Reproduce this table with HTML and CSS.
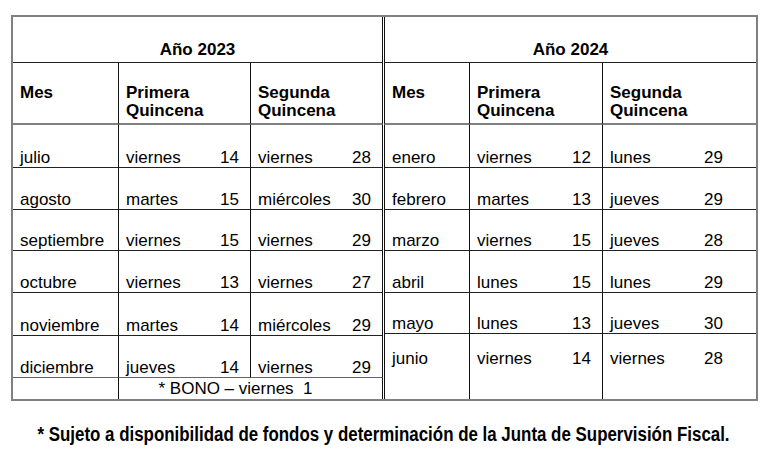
FILE: index.html
```html
<!DOCTYPE html>
<html lang="es">
<head>
<meta charset="utf-8">
<title>Calendario de pagos</title>
<link rel="stylesheet" href="styles.css">
</head>
<body>
<div class="page">
  <div class="frame">
    <table class="cal cal-2023">
      <colgroup><col class="c1"><col class="c2"><col class="c3"></colgroup>
      <thead>
        <tr class="yr"><th colspan="3">Año 2023</th></tr>
        <tr class="hd"><th>Mes</th><th>Primera<br>Quincena</th><th>Segunda<br>Quincena</th></tr>
      </thead>
      <tbody>
        <tr class="h43"><td>julio</td><td><div class="d"><span>viernes</span><span>14</span></div></td><td><div class="d"><span>viernes</span><span>28</span></div></td></tr>
        <tr class="h42"><td>agosto</td><td><div class="d"><span>martes</span><span>15</span></div></td><td><div class="d"><span>miércoles</span><span>30</span></div></td></tr>
        <tr class="h41"><td>septiembre</td><td><div class="d"><span>viernes</span><span>15</span></div></td><td><div class="d"><span>viernes</span><span>29</span></div></td></tr>
        <tr class="h42"><td>octubre</td><td><div class="d"><span>viernes</span><span>13</span></div></td><td><div class="d"><span>viernes</span><span>27</span></div></td></tr>
        <tr class="h43"><td>noviembre</td><td><div class="d"><span>martes</span><span>14</span></div></td><td><div class="d"><span>miércoles</span><span>29</span></div></td></tr>
        <tr class="h42 pre-bono"><td>diciembre</td><td><div class="d"><span>jueves</span><span>14</span></div></td><td><div class="d"><span>viernes</span><span>29</span></div></td></tr>
        <tr class="h21 bono"><td></td><td colspan="2" class="bono-cell">* BONO – viernes&nbsp; 1</td></tr>
      </tbody>
    </table>
    <table class="cal cal-2024">
      <colgroup><col class="k1"><col class="k2"><col class="k3"></colgroup>
      <thead>
        <tr class="yr"><th colspan="3">Año 2024</th></tr>
        <tr class="hd"><th>Mes</th><th>Primera<br>Quincena</th><th>Segunda<br>Quincena</th></tr>
      </thead>
      <tbody>
        <tr class="h43"><td>enero</td><td><div class="d"><span>viernes</span><span>12</span></div></td><td class="last"><div class="d"><span>lunes</span><span>29</span></div></td></tr>
        <tr class="h42"><td>febrero</td><td><div class="d"><span>martes</span><span>13</span></div></td><td class="last"><div class="d"><span>jueves</span><span>29</span></div></td></tr>
        <tr class="h41"><td>marzo</td><td><div class="d"><span>viernes</span><span>15</span></div></td><td class="last"><div class="d"><span>jueves</span><span>28</span></div></td></tr>
        <tr class="h42"><td>abril</td><td><div class="d"><span>lunes</span><span>15</span></div></td><td class="last"><div class="d"><span>lunes</span><span>29</span></div></td></tr>
        <tr class="h41"><td>mayo</td><td><div class="d"><span>lunes</span><span>13</span></div></td><td class="last"><div class="d"><span>jueves</span><span>30</span></div></td></tr>
        <tr class="h65 final"><td>junio</td><td><div class="d"><span>viernes</span><span>14</span></div></td><td class="last"><div class="d"><span>viernes</span><span>28</span></div></td></tr>
      </tbody>
    </table>
  </div>
  <p class="note"><span class="note-text">* Sujeto a disponibilidad de fondos y determinación de la Junta de Supervisión Fiscal.</span></p>
</div>
</body>
</html>
```
FILE: styles.css
```css
* { box-sizing: border-box; }
html, body { margin: 0; padding: 0; background: #fff; }
body {
  font-family: "Liberation Sans", Arial, sans-serif;
  color: #000;
  font-size: 17px;
}
.page { width: 768px; height: 457px; overflow: hidden; }
.frame {
  display: flex;
  gap: 1px;
  margin: 15px 0 0 11px;
  width: 747px;
  height: 386px;
  border: 2px solid #808080;
}
.cal {
  border-collapse: separate;
  border-spacing: 0;
  table-layout: fixed;
}
.cal-2023 { width: 370px; }
.cal-2024 { width: 372px; }
.c1 { width: 106px; }
.c2 { width: 132px; }
.c3 { width: 132px; }
.k1 { width: 86px; }
.k2 { width: 133px; }
.k3 { width: 153px; }

.cal th, .cal td {
  padding: 0 11px 0 7px;
  border-right: 1px solid #111;
  border-bottom: 1px solid #222;
  line-height: 19px;
  font-size: 17px;
  text-align: left;
  vertical-align: bottom;
  white-space: nowrap;
}
.cal-2024 tr > :first-child { border-left: 1px solid #111; }
.cal-2024 td.last, .cal-2024 .yr th { border-right: none; }
.cal-2024 td.last { padding-right: 33px; }
.cal-2024 .hd th:last-child { border-right: none; }

.yr { height: 46px; }
.yr th {
  text-align: center;
  font-weight: bold;
  padding: 0 0 3px 0;
}
.hd { height: 62px; }
.hd th {
  font-weight: bold;
  vertical-align: top;
  padding-top: 21px;
  line-height: 18px;
  border-bottom: 2px solid #808080;
}
.h21 { height: 21px; }
.h41 { height: 41px; }
.h42 { height: 42px; }
.h43 { height: 43px; }
.h65 { height: 65px; }

.d { display: flex; justify-content: space-between; }

.pre-bono td { border-bottom-color: #666; }
.bono td { border-bottom: none; vertical-align: middle; }
.bono .bono-cell { text-align: center; padding: 0 30px 0 0; }
.final td { border-bottom: none; vertical-align: top; padding-top: 15px; }

.note {
  margin: 23px 0 0 0;
  text-align: center;
  line-height: 20px;
  white-space: nowrap;
}
.note-text {
  display: inline-block;
  font-weight: bold;
  font-size: 20px;
  transform: scaleX(0.845);
  transform-origin: center;
  margin: 0 -70px;
}
```
